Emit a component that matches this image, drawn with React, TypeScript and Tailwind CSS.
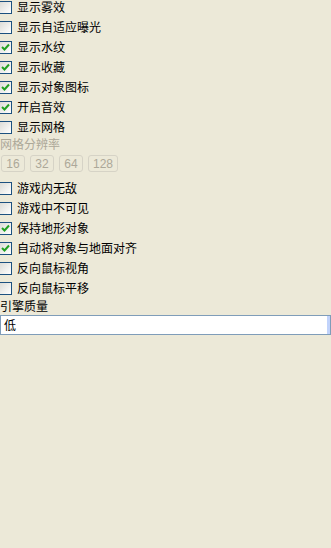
import React from "react";

const font = { fontFamily: '"Noto Sans CJK SC", "Liberation Sans", sans-serif' };

function Check({ label, checked }: { label: string; checked?: boolean }) {
  return (
    <div className="flex h-5 items-center">
      <div className="-ml-px flex h-[13px] w-[13px] items-center justify-center border border-[#1c5180] bg-gradient-to-br from-[#dcdcd7] to-white">
        {checked && (
          <svg width="9" height="9" viewBox="0 0 9 9">
            <path d="M1 4 L3.5 6.5 L8 1.5" stroke="#21a121" strokeWidth="2" fill="none" />
          </svg>
        )}
      </div>
      <span className="ml-[5px] text-[12px] leading-none text-black">{label}</span>
    </div>
  );
}

export default function App() {
  return (
    <div className="h-[548px] w-[331px] overflow-hidden bg-[#ece9d8]" style={font}>
      <div className="-mt-[3px]">
        <Check label="显示雾效" />
        <Check label="显示自适应曝光" />
        <Check label="显示水纹" checked />
        <Check label="显示收藏" checked />
        <Check label="显示对象图标" checked />
        <Check label="开启音效" checked />
        <Check label="显示网格" />
      </div>

      <div className="h-[13px] text-[12px] leading-[13px] text-[#aca899]">网格分辨率</div>
      <div className="mt-[5px] flex gap-[5px] pl-px">
        {["16", "32", "64", "128"].map((v) => (
          <div
            key={v}
            className="flex h-[17px] min-w-[24px] items-center justify-center rounded-[3px] border border-[#d6d3c6] px-[4px] text-[12px] text-[#aca899]"
            style={{ fontFamily: '"Liberation Sans", sans-serif' }}
          >
            {v}
          </div>
        ))}
      </div>

      <div className="mt-[6px]">
        <Check label="游戏内无敌" />
        <Check label="游戏中不可见" />
        <Check label="保持地形对象" checked />
        <Check label="自动将对象与地面对齐" checked />
        <Check label="反向鼠标视角" />
        <Check label="反向鼠标平移" />
      </div>

      <div className="h-[15px] text-[12px] leading-[15px] text-black">引擎质量</div>
      <div className="mt-[2px] flex h-5 items-center border border-[#7f9db9] bg-white">
        <span className="flex-1 pl-[3px] text-[12px] text-black">低</span>
        <div className="h-full w-[3px] bg-[#c1d3fb]" />
      </div>
    </div>
  );
}
